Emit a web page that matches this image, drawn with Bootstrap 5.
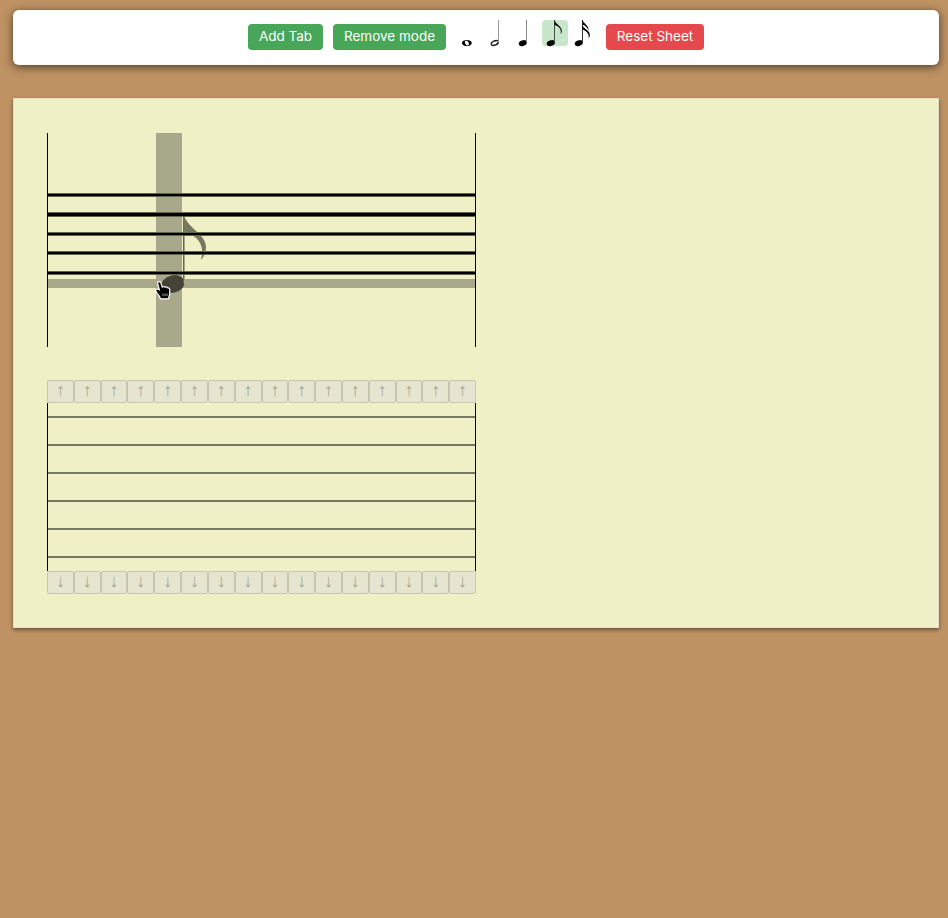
<!DOCTYPE html>
<html lang="en">
<head>
<meta charset="utf-8">
<meta name="viewport" content="width=device-width, initial-scale=1">
<title>Tab sheet</title>
<link href="https://cdn.jsdelivr.net/npm/bootstrap@5.3.0/dist/css/bootstrap.min.css" rel="stylesheet">
<style>
body{background:#bf9263;font-family:Inter,"Liberation Sans",sans-serif;min-height:918px;padding:10px 9px 0 13px;overflow:hidden}
.toolbar{height:55px;border-radius:6px;padding-top:10px;gap:10px;box-shadow:0 2px 10px rgba(0,0,0,.6)}
.toolbar .btn{height:26px;margin-top:4px;font-size:13.5px;border:0;border-radius:4px;color:#fff;white-space:nowrap}
.toolbar .btn span{display:block;height:26px;line-height:24px}
.btn-leaf,.btn-leaf:hover{background:#48a658}
.btn-rose,.btn-rose:hover{background:#e5484d}
.w-add{width:75px}.w-remove{width:113px}.w-reset{width:98px}
.notes{gap:2px;margin-left:2px}
.note-pick{width:26px;height:26px;padding:0;border:0;background:none;border-radius:4px}
.note-pick.chosen{background:#c8e6c9}
.note-pick svg{display:block;overflow:visible}
.sheet{margin-top:33px;height:530px;padding:34px 33px;background:#eff0c5;border:1px solid #e6dcc9;box-shadow:0 2px 4px rgba(0,0,0,.45)}
.measure{width:429px}
.staff{height:214px;margin-bottom:33px}
.staff svg,.strings svg{display:block;overflow:visible}
.strings{height:168px}
.step{flex:1 1 0;min-width:0;height:23px;padding:0;overflow:hidden;border:1px solid #c6c6b0;border-radius:2px;background:#e6e5cf;color:#a5a594;font:18px/20px "Liberation Sans",sans-serif}
.step span{display:block;height:21px;line-height:19px}
</style>
<script src="https://cdn.jsdelivr.net/npm/bootstrap@5.3.0/dist/js/bootstrap.bundle.min.js"></script>
</head>
<body>
<nav class="toolbar bg-white d-flex justify-content-center align-items-start">
  <button class="btn btn-leaf w-add p-0"><span>Add Tab</span></button>
  <button class="btn btn-leaf w-remove p-0"><span>Remove mode</span></button>
  <div class="notes d-flex">
    <button class="note-pick" aria-label="Whole note"><svg width="26" height="26"><path fill-rule="evenodd" d="M3.9 23C3.9 18.9 13.8 18.9 13.8 23S3.9 27.1 3.9 23ZM6.8 21.9C6.8 24.6 9.9 26.6 10.9 24.5C11.3 21.2 7.4 19.4 6.8 21.9Z"/></svg></button>
    <button class="note-pick" aria-label="Half note"><svg width="26" height="26"><ellipse cx="8.8" cy="23" rx="3.9" ry="2.3" transform="rotate(-24 8.8 23)" fill="#fff" stroke="#000" stroke-width="1"/><path d="M5.7 25.2Q10.8 25.5 12 22M5.3 24Q7 20.5 11.6 20.8" fill="none" stroke="#000" stroke-width=".7"/><path d="M12.5 0V22.5" stroke="#999"/></svg></button>
    <button class="note-pick" aria-label="Quarter note"><svg width="26" height="26"><ellipse cx="8.8" cy="23.1" rx="4.2" ry="2.8" transform="rotate(-20 8.8 23.1)"/><path d="M12.5 0V22.5" stroke="#888"/></svg></button>
    <button class="note-pick chosen" aria-label="Eighth note"><svg width="26" height="26"><ellipse cx="8.8" cy="23.1" rx="4.2" ry="2.8" transform="rotate(-20 8.8 23.1)"/><path d="M12.5 0V22.5" stroke="#445044"/><path d="M12.5 0C13.5 4.5 20.4 6.5 19.8 11.5Q19.6 13 18.5 14C20.2 9.2 16.4 5.8 12.5 5Z"/></svg></button>
    <button class="note-pick" aria-label="Sixteenth note"><svg width="26" height="26"><ellipse cx="8.8" cy="23.1" rx="4.2" ry="2.8" transform="rotate(-20 8.8 23.1)"/><path d="M12.5 0V22.5" stroke="#333"/><path d="M12.5 0C13.5 3.5 19 5.5 18.8 10.7Q17 6.3 12.5 4.5ZM12.5 5C13.5 9 20.5 10.5 19.8 15.5Q19.7 17 18.7 18.3C19.4 13.7 16 10.5 12.5 9.5Z"/></svg></button>
  </div>
  <button class="btn btn-rose w-reset p-0"><span>Reset Sheet</span></button>
</nav>
<main class="sheet">
  <div class="measure">
    <div class="staff">
      <svg width="429" height="214" aria-label="Staff">
        <path d="M109 0H135V214H109ZM1 146H428V155H1Z" fill="#a8a98a"/>
        <ellipse cx="126" cy="151" rx="12" ry="8.6" transform="rotate(-15 126 151)" opacity=".6"/>
        <path d="M136 83H137V151H136Z" fill="#66674f"/><path d="M137 83H138V151H137Z" fill="#a8a98a"/>
        <path d="M136.5 81.5C141 96 159.2 101 159 114.5Q158.8 121 154.5 126.5L154 126C159 111 148 101 136.5 98.5Z" fill="#77785f"/>
        <path d="M1 60H428V64H1ZM1 79H428V84H1ZM1 99H428V103H1ZM1 118H428V122H1ZM1 138H428V142H1Z" fill="#65664f"/>
        <path d="M1 61H428V63H1ZM1 80H428V83H1ZM1 100H428V102H1ZM1 119H428V121H1ZM1 139H428V141H1ZM0 0H1V214H0ZM428 0H429V214H428Z"/>
        <path d="M112.4 157L110.8 151Q110.3 148.8 112 148.6Q113.5 148.4 114.1 150.4L115.3 154.2Q117 152.8 118.2 154.3Q120.1 153.3 120.8 155Q122.5 154.7 122.8 156.8V160.5L121.5 165.8H113.4Q112.6 162.8 110 160.2L108.7 157.8Q109 155.8 110.8 156.1Z" stroke="#fff" stroke-width="1.2" stroke-linejoin="round"/>
        <path d="M116 160.5V163M118 160.5V163M120 160.5V163" stroke="#fff" stroke-width=".6"/>
      </svg>
    </div>
    <div class="d-flex" id="raise"></div>
    <div class="strings">
      <svg width="429" height="168" aria-label="Guitar strings">
        <path d="M1 13H428V15H1ZM1 41H428V43H1ZM1 69H428V71H1ZM1 97H428V99H1ZM1 125H428V127H1ZM1 153H428V155H1Z" fill="#777862"/>
        <path d="M0 0H1V168H0ZM428 0H429V168H428Z"/>
      </svg>
    </div>
    <div class="d-flex" id="lower"></div>
  </div>
</main>
<script>
for (const [id, arrow] of [['raise', '↑'], ['lower', '↓']]) {
  document.getElementById(id).innerHTML = `<button class="step" disabled><span>${arrow}</span></button>`.repeat(16);
}
</script>
</body>
</html>
